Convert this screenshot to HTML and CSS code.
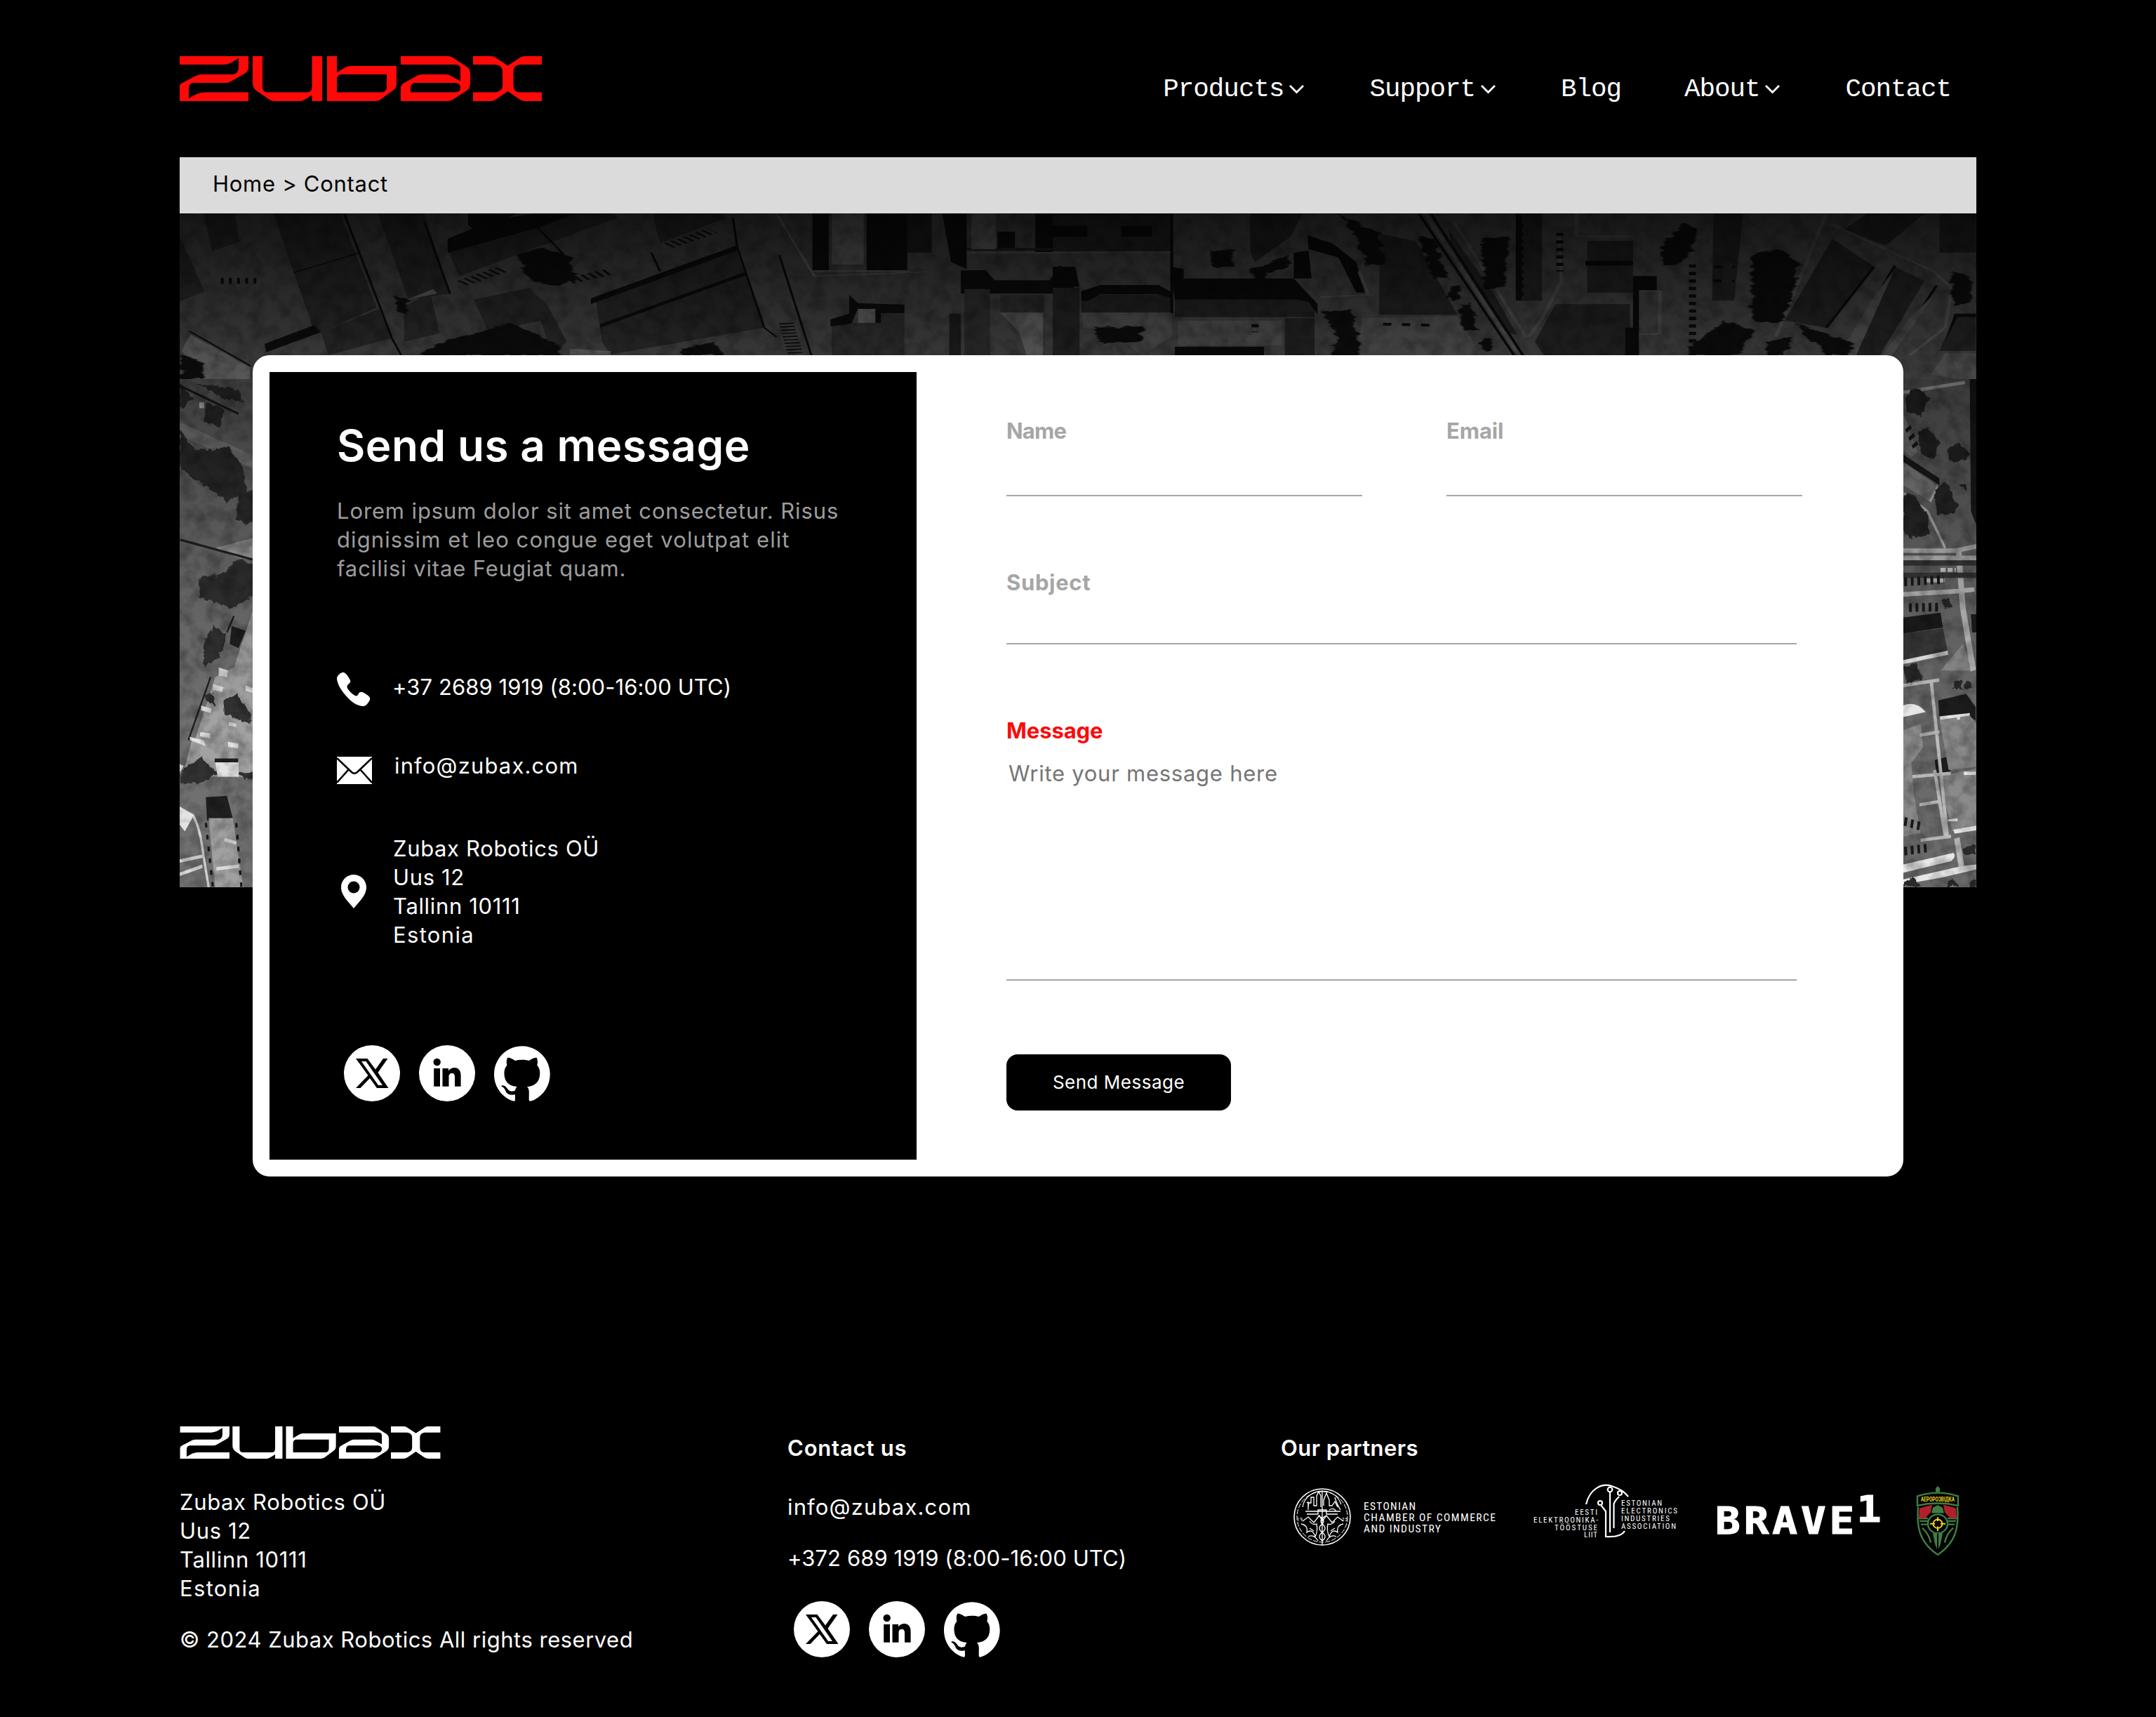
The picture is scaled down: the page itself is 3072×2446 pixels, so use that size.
FILE: index.html
```html
<!DOCTYPE html>
<html lang="en">
<head>
<meta charset="utf-8">
<title>Contact | Zubax Robotics</title>
<link rel="stylesheet" href="styles.css">
</head>
<body>
<!-- Shared symbols -->
<svg class="defs" width="0" height="0" aria-hidden="true">
  <symbol id="logo" viewBox="0 0 516 64">
    <g fill="currentColor" fill-rule="evenodd">
      <path d="M0 0H98V15Q98 21 94 24L72 36.500Q69 38 67 38H20Q13 38 13 47V60L24 54Q30 51.500 36 51.500H98V64H0V43Q0 40 4 38L24 27.500Q27 26 31 26H76Q84 25 84 15V3L73 9.500Q68 12 62 12H0Z"/>
      <path d="M104 0H118V43Q118 51.500 124 51.500H183Q188.500 51 188.500 43V0H203V64H188.500V55.500L178 62Q175 64 172 64H134Q131 64 128 62L109 49Q104 45 104 38Z"/>
      <path d="M210 0H224V23.300L237 15.500Q241 14 243 14H309V40Q309 45 305 48L286 62Q283 64 279 64H210ZM224 51.500V34Q224 26 231 26H295V43Q295 51.500 288 51.500Z"/>
      <path d="M315 0H382Q386 0 389 2L409 15Q414 18 414 25V38Q414 46 409 49L389 62Q386 64 382 64H315V45Q315 41 320 38L339 27.500Q342 26 345 26H380Q384 26 388 29L400 35.500V18Q400 12 393 12H315ZM329 51.500V46Q329 38 336 38H393Q400 38.500 400 45Q400 51.500 393 51.500Z"/>
      <path d="M418 0H443Q447 0 450 2L467.500 13.500L485 2Q488 0 493 0H516V12H485Q475.500 13 475.500 22V42Q475.500 51.500 485 51.500H516V64H493Q488 64 485 62L467.500 50L450 62Q447 64 443 64H418V51.500H450Q460 50 460 42V22Q460 13 450 12H418Z"/>
    </g>
  </symbol>
  <symbol id="chevron" viewBox="0 0 28 28">
    <path d="M5 9L14.500 18.500L24 9" fill="none" stroke="currentColor" stroke-width="2.800"/>
  </symbol>
  <symbol id="x" viewBox="0 0 80 80">
    <circle cx="40" cy="40" r="40" fill="#fff"/>
    <path fill="#000" fill-rule="evenodd" d="M17 19H33.500L45 34.500L56 19H62.500L48.500 39L63.500 61H47L37 47L23.500 61H17L34.500 43ZM25 23L49 57H55L31.500 23Z"/>
  </symbol>
  <symbol id="in" viewBox="0 0 80 80">
    <circle cx="40" cy="40" r="40" fill="#fff"/>
    <circle cx="25.700" cy="24" r="5.200"/>
    <path d="M21.200 33H30V58.700H21.200ZM33.500 33H42V36.500C44 33.500 47 32 50.500 32C57 32 59.600 37 59.600 43V58.700H51V45C51 42 50 40 46.800 40S42.500 42 42.500 45V58.700H33.500Z"/>
  </symbol>
  <symbol id="gh" viewBox="0 0 98 96">
    <path fill="#fff" d="M48.854 0C21.839 0 0 22 0 49.217c0 21.756 13.993 40.172 33.405 46.690 2.427.49 3.316-1.059 3.316-2.362 0-1.141-.08-5.052-.08-9.127-13.590 2.934-16.420-5.867-16.420-5.867-2.184-5.704-5.420-7.170-5.420-7.170-4.448-3.015.324-3.015.324-3.015 4.934.326 7.523 5.052 7.523 5.052 4.367 7.496 11.404 5.378 14.235 4.074.404-3.178 1.699-5.378 3.074-6.600-10.839-1.141-22.243-5.378-22.243-24.283 0-5.378 1.940-9.778 5.014-13.200-.485-1.222-2.184-6.275.486-13.038 0 0 4.125-1.304 13.426 5.052a46.970 46.970 0 0 1 12.214-1.630c4.125 0 8.330.571 12.213 1.630 9.302-6.356 13.427-5.052 13.427-5.052 2.670 6.763.97 11.816.485 13.038 3.155 3.422 5.015 7.822 5.015 13.200 0 18.905-11.404 23.060-22.324 24.283 1.780 1.548 3.316 4.481 3.316 9.126 0 6.600-.08 11.897-.08 13.526 0 1.304.89 2.853 3.316 2.364 19.412-6.520 33.405-24.935 33.405-46.691C97.707 22 75.788 0 48.854 0z"/>
  </symbol>
</svg>

<div class="page">
  <header class="header">
    <svg class="header-logo" aria-label="Zubax"><use href="#logo"/></svg>
    <nav class="nav">
      <a>Products<svg class="chev"><use href="#chevron"/></svg></a>
      <a>Support<svg class="chev"><use href="#chevron"/></svg></a>
      <a>Blog</a>
      <a>About<svg class="chev"><use href="#chevron"/></svg></a>
      <a>Contact</a>
    </nav>
  </header>

  <div class="crumbs">Home &gt; Contact</div>

  <main class="hero">
    <svg class="aerial" viewBox="0 0 2560 960" preserveAspectRatio="none" aria-hidden="true">
      <defs>
        <linearGradient id="shade" x1="0" y1="0" x2="0" y2="1">
          <stop offset="0" stop-color="#000" stop-opacity=".8"/>
          <stop offset=".21" stop-color="#000" stop-opacity=".5"/>
          <stop offset=".5" stop-color="#000" stop-opacity=".18"/>
          <stop offset=".75" stop-color="#000" stop-opacity="0"/>
        </linearGradient>
        <filter id="grain" x="0" y="0" width="100%" height="100%">
          <feTurbulence type="fractalNoise" baseFrequency=".05" numOctaves="3" seed="7"/>
          <feColorMatrix values="0 0 0 0 0  0 0 0 0 0  0 0 0 0 0  .6 0 0 0 -.22"/>
        </filter>
        <filter id="rough" x="-10%" y="-10%" width="120%" height="120%">
          <feTurbulence type="fractalNoise" baseFrequency=".05" numOctaves="3" seed="3"/>
          <feDisplacementMap in="SourceGraphic" scale="20" xChannelSelector="R" yChannelSelector="G" result="d"/>
          <feGaussianBlur in="d" stdDeviation="1.500"/>
        </filter>
      </defs>
      <rect width="2560" height="960" fill="#6e6e6e"/>

      <!-- north strip, western half -->
      <g transform="matrix(.829 0 0 .3333 -16 -4)">
        <path fill="#464646" d="M60 12H115L122 135L75 172ZM18 100L62 345L18 390ZM180 12H295L358 415L262 520L247 490ZM262 520L362 420L384 545L275 618ZM360 12H440L484 355L412 378ZM480 170L640 12H760L772 30L500 280ZM832 12H940L960 30L845 140ZM735 385L975 165L1024 500L760 615L745 560ZM525 380L620 330L650 400L685 560L660 618L640 470L550 520ZM405 410L450 350L466 525L405 560Z"/>
        <path fill="#161616" d="M165 570L250 490L262 520L168 605ZM480 120L560 40L630 12H700L640 70L480 180ZM726 375L975 150L978 170L726 400ZM742 485L992 262L994 275L742 500ZM1107 12H1135V255H1107ZM1200 12H1270V255H1200ZM1330 12H1372V250L1345 220ZM1362 255H1405L1420 298H1515L1530 235L1556 250V355H1362ZM1170 360L1185 395L1265 402V438H1225V480H1185V420L1172 495H1138V465L1170 440ZM1425 90H1455V160H1425ZM1490 12H1525V178H1490ZM515 12H600L530 90L515 60Z"/>
        <path fill="#505050" d="M1140 495L1180 480H1225V438H1265V618H1140ZM1368 335H1412V618H1368ZM1430 360H1505V435H1430Z"/>
        <path fill="#333" d="M1270 12H1312V180H1270ZM1372 170H1568V12H1530V160H1372ZM1342 440H1362V618H1342Z"/>
        <path fill="#a2a2a2" d="M38 530L140 670V720H60L22 600ZM1185 420H1215V480H1185ZM1380 12H1422V165H1380ZM1140 12H1195V230H1140ZM1432 440H1503V618H1475L1462 520ZM405 385L455 335L462 355L415 378ZM690 590L760 600V618H690Z"/>
        <g fill="none" stroke="#141414" stroke-width="4">
          <path d="M302 12L365 420L384 545L400 618M440 50L484 355M970 30L978 160L1024 500L1045 540M1050 190L1105 618M215 265L330 180M36 515L142 665M630 60L680 190M830 180L845 260"/>
        </g>
        <path fill="none" stroke="#a0a0a0" stroke-width="4" d="M1107 258H1275M1045 12L1110 280L1300 262M1430 438H1505M1372 180H1568"/>
        <path fill="none" stroke="#161616" stroke-width="26" stroke-dasharray="5 9" d="M505 310L575 250M90 300H160M690 300L760 260M860 150L935 85M1062 480L1078 618"/>
        <path filter="url(#rough)" fill="#131313" d="M470 560L590 480L660 560L680 618H430ZM600 190L640 160L690 190L700 300L660 320L620 300ZM390 360L412 380V450L390 420ZM20 618L60 650V720H20ZM880 590L940 560L950 618H885Z"/>
      </g>

      <!-- north strip, eastern half -->
      <g transform="matrix(.848 0 0 .3333 1244 -4)">
        <path fill="#3c3c3c" d="M0 12H198V178H0ZM332 12H420L400 110L340 220L332 180ZM550 100L610 130L680 445H548ZM785 12H822V385H785ZM898 130H975V350H898ZM845 400H970V618H825L810 560ZM1110 12H1160L1145 385H1108ZM1310 120L1380 240L1300 500L1230 470ZM1415 240L1465 300L1390 618H1350ZM1490 12H1551V180H1490ZM1515 450H1551V600H1490ZM205 380H440V455H205ZM48 360H200V435H48ZM390 460H440V618H390ZM1330 80L1370 12H1465L1400 150ZM665 80L740 350L780 530L760 520L670 160ZM0 330H45V618H0Z"/>
        <path fill="#121212" d="M0 65H58V112H0ZM115 65H166V112H115ZM0 240H38L45 325H0ZM48 345L80 318H178L198 345V372L175 358H80L60 385H48ZM198 240L220 250V290H405L445 400V445L430 390L410 380H205ZM428 105L470 140L510 220L525 350H510L480 200L430 165ZM405 180L430 170L435 290H405ZM205 582H355V618H205ZM895 215H975V235H895ZM975 280H1015V340H985V618H962V500H975ZM1515 440H1551V455H1520L1500 560ZM778 12H788V385H778Z"/>
        <path fill="none" stroke="#121212" stroke-width="5" d="M615 12L775 618M635 12L790 618M200 12V440M1380 240L1300 500M1415 235L1345 540M1485 320L1410 618"/>
        <path fill="none" stroke="#8a8a8a" stroke-width="6" d="M675 50L795 540M625 12L784 618M850 100L855 300L825 450L800 540M880 12V110H975M1300 12L1215 540M1310 60L1480 260L1510 330L1500 500L1440 618M0 178H198M48 440H200M515 260L530 360L450 370M985 345H1020V528H985"/>
        <path fill="#868686" d="M50 445H200V540L150 618L95 510L50 500ZM210 470H385V575H210ZM520 460L680 450L720 618H510ZM1500 610H1551V720H1520L1475 700ZM1385 350L1415 250L1350 618H1320ZM1440 460L1480 360L1412 618H1395Z"/>
        <path fill="none" stroke="#131313" stroke-width="12" stroke-dasharray="14 18" d="M852 95V260M1075 230V618M555 485L635 490M340 485V520M785 60V380M1110 240H1145M1110 300H1145"/>
        <g filter="url(#rough)" fill="#131313">
          <path d="M265 170L300 165L305 240L270 250ZM335 250L395 190L400 230L340 300ZM450 430L500 420L510 500L515 618H470L480 540ZM480 12L550 100L560 220L530 240L510 120ZM615 110L640 120L665 290L640 290ZM720 120L765 110L760 330L725 340ZM665 320H685V380H665ZM683 400H705L712 510H690ZM1020 160L1060 50L1085 80L1070 200L1030 240ZM1175 190L1220 165L1255 230L1245 360L1220 480L1175 470ZM1070 580L1130 470L1180 520L1150 618H1070ZM1200 560L1245 540L1230 618H1200ZM1245 480L1340 560V618H1300ZM1510 260L1540 280L1545 390L1515 410ZM720 545H738V600H722ZM70 500L150 495L150 560L80 570Z"/>
        </g>
      </g>

      <!-- west edge -->
      <g transform="matrix(.3333 0 0 .472 -16 236)">
        <rect x="48" y="0" width="330" height="1534" fill="#707070"/>
        <path fill="#8c8c8c" d="M48 130L360 230V270L48 170Z"/>
        <path fill="#a2a2a2" d="M200 510L360 480V545L300 540ZM360 700V1140H90L200 900L280 870ZM100 1090L360 1100V1200H60Z"/>
        <g filter="url(#rough)" fill="#303030">
          <path d="M48 12L110 60L48 90ZM160 70L240 90L220 145L150 130ZM170 215L260 205L320 270L330 340L250 370L180 330L120 310L48 260V150L110 210ZM300 350L370 330V440L290 430ZM130 600L230 590L300 545L370 560V650L270 690L130 660ZM150 800L190 745L250 770L220 840L150 870ZM150 960L190 945L200 990ZM235 970L290 950L350 1010V1040L240 1010ZM60 1180L140 1140L210 1190L130 1220H50ZM280 1190L370 1185V1215ZM120 12L300 30L320 70L240 60Z"/>
        </g>
        <path stroke="#222" stroke-width="7" fill="none" d="M48 20L300 105M50 485L360 545M85 1090L180 900M250 765L280 715"/>
        <path fill="#e4e4e4" d="M215 870L255 880L250 900L215 895ZM190 920L235 930L230 945L190 938ZM330 925L370 935V950L330 940ZM140 985L185 995L180 1008L140 1000ZM135 1065L180 1070L178 1085L135 1078ZM258 1035L290 1040V1050L258 1046ZM255 1095L298 1100V1115L255 1110ZM200 1155H300V1200H210ZM90 1080L150 1090L160 1108L95 1090ZM48 1162L65 1168L48 1188ZM48 1290L110 1315L70 1365L48 1345ZM132 70H152V88H132Z"/>
        <path fill="#202020" d="M198 1145H298V1157H198ZM160 1262L250 1258L275 1325L165 1332ZM270 745L330 760L300 812L262 800Z"/>
        <path fill="#a0a0a0" d="M172 1325H275L320 1534H200Z"/>
        <path fill="none" stroke="#dcdcdc" stroke-width="10" d="M105 1318Q135 1350 150 1440L172 1534M48 1455L145 1440M48 1495L145 1470M205 1478L300 1470M240 1390L290 1400"/>
        <path fill="none" stroke="#1a1a1a" stroke-width="10" stroke-dasharray="14 22" d="M160 1340L190 1534M290 1340L312 1534"/>
      </g>

      <!-- east edge -->
      <g transform="matrix(.3333 0 0 .472 2444 236)">
        <rect x="20" y="0" width="328" height="1534" fill="#6a6a6a"/>
        <path fill="#1c1c1c" d="M320 0H348V440L325 400ZM36 720L195 705L205 750L36 768ZM185 970L305 950L345 990V1030L300 1010L190 1022ZM170 1150L232 1138L238 1190L178 1195ZM36 228L190 300V320L36 250ZM325 710H348V765H330Z"/>
        <path fill="#8a8a8a" d="M36 100L95 220L70 235L36 215ZM36 250L185 325L150 370L36 320ZM190 1025L320 1015L348 1040V1170L230 1180ZM190 1200L348 1175V1350L245 1365ZM36 1060L110 1040L120 1110L70 1160L80 1250L110 1370L36 1380ZM195 880L290 800L340 880Z"/>
        <path fill="#3a3a3a" d="M36 768L205 752L225 820L36 850Z"/>
        <g fill="none" stroke="#bcbcbc">
          <path stroke-width="14" d="M36 518H260L348 505M36 540H348M36 650L270 640L340 635M155 910L225 1385M170 1180L215 1380"/>
          <path stroke-width="24" d="M272 515L290 690L335 880M265 1385L285 1475"/>
          <path stroke-width="10" d="M36 345L140 400L215 510M36 925L190 908M105 1075L190 1065M75 1200L240 1190M105 1285L190 1275M110 1392L240 1380M150 370L185 320M36 40L300 10"/>
        </g>
        <path fill="none" stroke="#3b3b3b" stroke-width="16" d="M36 555H348M36 592H348"/>
        <path fill="none" stroke="#d0d0d0" stroke-width="12" stroke-dasharray="22 8" d="M195 576H260M130 608H220"/>
        <path fill="#e8e8e8" d="M36 985Q90 970 132 1005L36 1020ZM36 848L125 835L225 820L228 832L120 848L36 860ZM36 1465L250 1430Q265 1440 240 1455L36 1490ZM250 1360L348 1348V1362L255 1372ZM36 1510L285 1470L348 1465V1480L200 1505L36 1525ZM295 1185H345V1195H295ZM225 1330L268 1325V1335H228ZM190 1018L320 1008V1016L195 1028ZM265 1015H278V1028H265Z"/>
        <path fill="none" stroke="#1b1b1b" stroke-width="26" stroke-dasharray="12 16" d="M40 612L210 605M60 690L190 688M55 145L95 215M40 1335L110 1350M40 1425L140 1415"/>
        <g filter="url(#rough)" fill="#2a2a2a">
          <path d="M45 60L90 20L150 60L110 110L50 100ZM100 160L140 145L190 190L170 240L110 230ZM225 215L270 190L320 225L300 250L230 245ZM36 350L80 350L140 410L150 470L60 480L36 460ZM170 330L220 310L270 380L250 410L180 410ZM36 870L90 855L120 900L50 920ZM250 920L285 910L290 935H250ZM295 920L325 912L330 935H295ZM270 320L305 315V335ZM36 1520L80 1505L110 1534H36ZM225 1515L250 1508L275 1534H225ZM320 1515L345 1508V1534H320ZM200 670L235 660L245 690L210 695ZM290 1415L345 1405V1430L300 1435Z"/>
        </g>
      </g>

      <rect width="2560" height="960" filter="url(#grain)"/>
      <rect width="2560" height="960" fill="url(#shade)"/>
    </svg>

    <section class="card">
      <div class="info">
        <h1>Send us a message</h1>
        <p class="lead"><span>Lorem ipsum dolor sit amet consectetur. Risus</span><br><span class="lead-mid">dignissim et leo congue eget volutpat elit</span><br><span>facilisi vitae Feugiat quam.</span></p>
        <div class="row phone">
          <svg width="48" height="50" viewBox="0 0 48 50"><path fill="#fff" d="M8 1C11 0 15 5 18 10C20 14 20 15 16 18C14 20 14 22 16 25C19 29 22 32 26 34C28 35 30 34 31 31C33 28 36 28 40 31C46 34 48 37 47 40C45 44 42 49 37 49C30 49 20 43 12 33C4 24 0 15 0 9C1 5 4 2 8 1Z"/></svg>
          <span class="tel">+37 2689 1919 (8:00-16:00 UTC)</span>
        </div>
        <div class="row mail">
          <svg width="50" height="40" viewBox="0 0 50 40"><rect width="50" height="39" fill="#fff"/><path fill="none" stroke="#000" stroke-width="2.600" d="M0 2L21 22Q25 25.500 29 22L50 2M0 37L16.500 18.500M50 37L33.500 18.500"/></svg>
          <span class="mailto">info@zubax.com</span>
        </div>
        <div class="row place">
          <svg width="48" height="48" viewBox="0 0 48 48"><path fill="#fff" fill-rule="evenodd" d="M24 0C34 0 42 8 42 18C42 30 31 39 24 48C17 39 6 30 6 18C6 8 14 0 24 0ZM24 9.500A8.500 8.500 0 1 0 24 26.500A8.500 8.500 0 1 0 24 9.500Z"/></svg>
          <address class="addr">Zubax Robotics OÜ<br>Uus 12<br>Tallinn 10111<br><span class="wide">Estonia</span></address>
        </div>
        <div class="social">
          <svg><use href="#x"/></svg><svg><use href="#in"/></svg><svg class="gh"><use href="#gh"/></svg>
        </div>
      </div>

      <form class="form">
        <div class="pair">
          <div class="field"><label class="tight" for="name">Name</label><input id="name" type="text"></div>
          <div class="field"><label for="email">Email</label><input id="email" type="email"></div>
        </div>
        <div class="field subject"><label class="loose" for="subject">Subject</label><input id="subject" type="text"></div>
        <div class="field message"><label for="message">Message</label><textarea id="message" placeholder="Write your message here"></textarea></div>
        <button type="button">Send Message</button>
      </form>
    </section>
  </main>

  <footer class="footer">
    <div class="company">
      <svg class="footer-logo" aria-label="Zubax"><use href="#logo"/></svg>
      <address class="addr">Zubax Robotics OÜ<br>Uus 12<br>Tallinn 10111<br><span class="wide">Estonia</span></address>
      <p class="copy">© 2024 Zubax Robotics All rights reserved</p>
    </div>
    <div class="contact">
      <h2>Contact us</h2>
      <p class="mailto">info@zubax.com</p>
      <p class="tel">+372 689 1919 (8:00-16:00 UTC)</p>
      <div class="social">
        <svg><use href="#x"/></svg><svg><use href="#in"/></svg><svg class="gh"><use href="#gh"/></svg>
      </div>
    </div>
    <div class="partners">
      <h2 class="partners-title">Our partners</h2>
      <div class="partner-row">
        <svg width="296" height="108" viewBox="0 0 296 108" class="p-text">
          <g fill="none" stroke="#fff">
            <circle cx="44" cy="50" r="40" stroke-width="1.600"/>
            <circle cx="44" cy="50" r="36" stroke-width="1" stroke-dasharray="7 2"/>
            <path stroke-width="1.300" d="M44 12V90M24 40V30H28V22H32V34H36V20L39 14L42 20V36M46 34V26L50 16L54 26V34H58L62 28L66 36M20 42H70M22 46H38V40H50V46H66M16 56L24 50L32 58L40 48L44 56L50 48L58 58L66 50L74 56M38 48Q50 54 44 60Q36 66 44 72Q52 78 44 84M50 48Q38 54 44 60Q52 66 44 72Q36 78 44 84M14 60Q24 62 22 72Q30 66 34 78Q38 70 36 60Q30 62 26 56M74 60Q64 62 66 72Q58 66 54 78Q50 70 52 60Q58 62 62 56M24 78Q32 74 38 84M64 78Q56 74 50 84M16 36Q18 24 28 18Q38 11 52 14Q66 18 71 32M22 30Q26 26 24 36M62 22Q64 30 70 40M54 40Q60 36 64 42M26 66L32 70M62 66L56 70"/>
          </g>
          <g font-size="7"><text x="8" y="56" textLength="8">19</text><text x="72" y="56" textLength="8">25</text></g>
          <g font-size="15.500">
            <text x="103" y="40" textLength="74">ESTONIAN</text>
            <text x="103" y="56" textLength="188">CHAMBER OF COMMERCE</text>
            <text x="103" y="71.500" textLength="110">AND INDUSTRY</text>
          </g>
        </svg>
        <svg width="216" height="108" viewBox="0 0 216 108" class="p-text eeia">
          <g fill="none" stroke="#fff" stroke-width="2.200">
            <path d="M80 32C85 10 103 0 119 7C129 10 136 16 140 21M135 70C132 75 124 79 108 78V42L101 33M114 72V15M119.500 66V32Q120 28 127 21"/>
            <circle cx="114" cy="11" r="3.300"/><circle cx="128" cy="16" r="3"/><circle cx="100" cy="30" r="3"/>
          </g>
          <g font-size="11">
            <text x="64" y="47" textLength="32">EESTI</text>
            <text x="5" y="57.500" textLength="92">ELEKTROONIKA-</text>
            <text x="35" y="68.500" textLength="61">TÖÖSTUSE</text>
            <text x="77" y="79" textLength="19">LIIT</text>
            <text x="130" y="34" textLength="58">ESTONIAN</text>
            <text x="130" y="45" textLength="80">ELECTRONICS</text>
            <text x="130" y="56" textLength="69">INDUSTRIES</text>
            <text x="130" y="67" textLength="78">ASSOCIATION</text>
          </g>
        </svg>
        <svg width="240" height="108" viewBox="0 0 240 108" class="brave">
          <g transform="scale(1.120 1)">
            <text x="0" y="74" font-size="53" letter-spacing="4.400">BRAVE</text>
            <text x="180" y="57.500" font-size="52">1</text>
          </g>
        </svg>
        <svg width="64" height="108" viewBox="0 0 64 108" class="shield">
          <g transform="translate(0 6) scale(1 .96)">
            <g fill="none" stroke="#3f7d45" stroke-width="2.400">
              <path d="M3 15Q32 5 61 15V29Q32 22 3 29ZM4 31C2 58 4 82 32 102C60 82 62 58 60 31M8 35L18 31M56 35L46 31"/>
              <circle cx="32" cy="56" r="14"/><path d="M5 48H18M6 52H18M8 57H18M59 48H46M58 52H46M56 57H46M10 62Q20 72 22 84M54 62Q44 72 42 84"/>
            </g>
            <path fill="#b0202a" d="M6 33Q16 29 24 28L22 39L14 48H5ZM58 33Q48 29 40 28L42 39L50 48H59Z"/>
            <path fill="#3f7d45" d="M32 28L39 32L41 40H23L25 32ZM25 70H39L36 86L32 97L28 86ZM29 9V3L32 0L35 3V9Z"/>
            <path d="M32 70V96" stroke="#000" stroke-width="2"/>
            <g fill="none" stroke="#e8d21a" stroke-width="2"><circle cx="32" cy="56" r="6.500"/><path d="M32 46V52M32 60V67M21 56H28M36 56H43"/></g>
            <text x="8" y="22.500" font-size="10" textLength="48" lengthAdjust="spacingAndGlyphs">АЕРОРОЗВІДКА</text>
          </g>
        </svg>
      </div>
    </div>
  </footer>
</div>
</body>
</html>
```
FILE: styles.css
```css
* { box-sizing: border-box; }

body {
  margin: 0;
  background: #000;
  color: #fff;
  font: 400 31px/41px "Inter", "Liberation Sans", sans-serif;
}

h1, h2, p { margin: 0; }
svg { display: block; flex: none; }
.defs { position: absolute; }

.page {
  width: 2560px;
  height: 2446px;
  margin: 0 auto;
}

/* Header */
.header {
  display: flex;
  justify-content: space-between;
  height: 224px;
  padding: 80px 36px 0 0;
}
.header-logo {
  width: 516px;
  height: 64px;
  color: #ff0808;
}
.nav {
  display: flex;
  align-items: flex-start;
  gap: 90px;
  padding-top: 23px;
  font: 400 37.5px/48px "Liberation Mono", monospace;
  letter-spacing: -1px;
}
.nav a {
  display: flex;
  align-items: center;
  gap: 4px;
  white-space: nowrap;
}
.chev {
  width: 28px;
  height: 28px;
}

.crumbs {
  height: 80px;
  padding: 17px 0 0 47px;
  background: #dbdbdb;
  color: #000;
  letter-spacing: .72px;
}

/* Hero and contact card */
.hero {
  position: relative;
  padding: 202px 104px 0;
}
.aerial {
  position: absolute;
  top: 0;
  left: 0;
  width: 2560px;
  height: 960px;
}
.card {
  position: relative;
  display: flex;
  height: 1170px;
  padding: 24px;
  border-radius: 24px;
  background: #fff;
}
.info {
  width: 922px;
  padding: 64px 0 0 96px;
  background: #000;
  white-space: nowrap;
}
h1 {
  font-size: 62px;
  font-weight: 600;
  line-height: 82px;
  letter-spacing: .54px;
}
.lead {
  margin-top: 31px;
  color: #9d9d9d;
  letter-spacing: .88px;
}
.lead-mid { letter-spacing: 1.08px; }
.row {
  display: flex;
  align-items: center;
}
.phone {
  height: 50px;
  margin-top: 127px;
  gap: 31px;
}
.phone .tel { margin-top: -8px; }
.mail {
  height: 46px;
  margin-top: 63px;
  gap: 32px;
  align-items: flex-start;
}
.mail svg { margin-top: 8px; }
.place {
  margin-top: 72px;
  gap: 32px;
}
.tel { letter-spacing: .08px; }
.mailto { letter-spacing: 1.15px; }
.addr {
  font-style: normal;
  letter-spacing: .65px;
}
.wide { letter-spacing: 1.33px; }

.social {
  display: flex;
  gap: 27px;
  margin: 137px 0 0 10px;
}
.social svg {
  width: 80px;
  height: 80px;
}
.social .gh { padding-top: 1px; }

/* Form */
.form {
  padding: 63px 0 0 128px;
}
.pair {
  display: flex;
  gap: 120px;
}
.field {
  display: flex;
  flex-direction: column;
  width: 1126px;
  color: #a6a6a6;
}
.pair .field { width: 507px; }
.field label {
  font-weight: 700;
  letter-spacing: -.1px;
}
.field .tight { letter-spacing: -.8px; }
.field .loose { letter-spacing: .65px; }
.field input,
.field textarea {
  width: 100%;
  height: 73px;
  padding: 0;
  border: 0;
  border-bottom: 2px solid #a6a6a6;
  border-radius: 0;
  outline: 0;
  background: transparent;
  resize: none;
  font: inherit;
  letter-spacing: .74px;
}
.subject { margin-top: 102px; }
.subject input { height: 68px; }
.message { margin-top: 102px; }
.message label { color: #fb0a0a; }
.field textarea {
  height: 336px;
  padding: 20px 3px 0;
}
.field textarea::placeholder { color: #757575; }

button {
  display: block;
  width: 320px;
  height: 80px;
  margin-top: 105px;
  padding: 0;
  border: 0;
  border-radius: 16px;
  background: #000;
  color: #fff;
  font: 400 26px/80px "Inter", "Liberation Sans", sans-serif;
  letter-spacing: .5px;
}

/* Footer */
.footer {
  display: flex;
  padding-top: 356px;
  white-space: nowrap;
}
.company { width: 866px; }
.footer-logo {
  width: 372px;
  height: 46px;
}
.company .addr { margin-top: 41px; }
.copy {
  margin-top: 32px;
  letter-spacing: .5px;
}
.contact {
  width: 703px;
  padding-top: 10px;
}
h2 {
  font-size: 31px;
  font-weight: 600;
  line-height: 41px;
  letter-spacing: .8px;
}
.contact .mailto { margin-top: 43px; }
.contact .tel { margin-top: 32px; }
.contact .social { margin: 41px 0 0 9px; }
.partners { padding-top: 10px; }
.partners-title { letter-spacing: .43px; }
.partner-row {
  display: flex;
  margin: 28px 0 0 15px;
}
.eeia { margin-left: 44px; }
.brave { margin-left: 48px; }
.shield { margin-left: 45px; }
.p-text text {
  fill: #fff;
  font-family: "Roboto", "Liberation Sans", sans-serif;
  font-stretch: 75%;
  font-weight: 400;
}
.brave text {
  fill: #fff;
  stroke: #fff;
  stroke-width: 1.2px;
  font-family: "DejaVu Sans Mono", monospace;
  font-weight: 700;
}
.shield text {
  fill: #e8d21a;
  font-family: "Roboto", "Liberation Sans", sans-serif;
  font-weight: 700;
}
```
